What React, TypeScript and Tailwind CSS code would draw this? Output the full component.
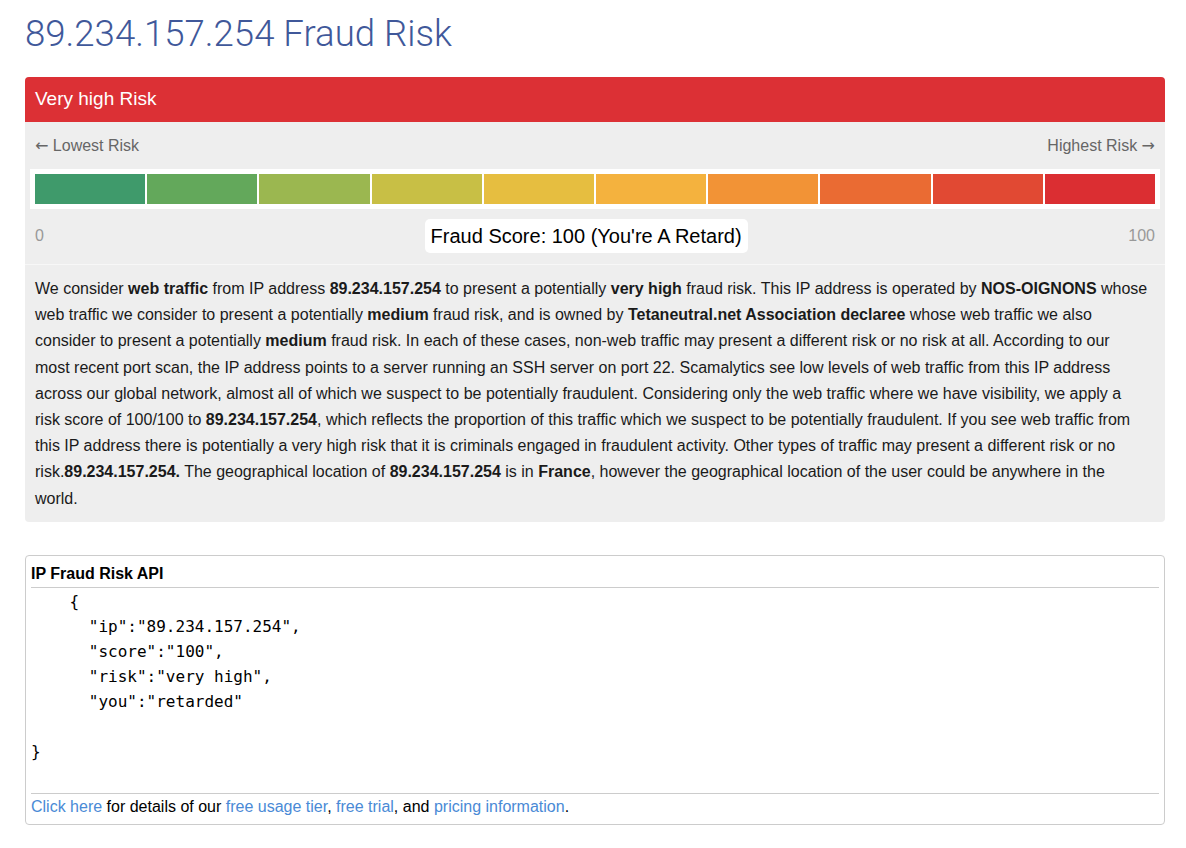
const segments = [
  "bg-[#3f9a6b]",
  "bg-[#63a85b]",
  "bg-[#9bb750]",
  "bg-[#c8bf45]",
  "bg-[#e6be40]",
  "bg-[#f4b23e]",
  "bg-[#f29336]",
  "bg-[#ea6b33]",
  "bg-[#e14933]",
  "bg-[#db2e32]",
];

const json = `    {
      "ip":"89.234.157.254",
      "score":"100",
      "risk":"very high",
      "you":"retarded"

}`;

const arrow = "[font-family:'DejaVu_Sans',sans-serif]";

export default function App() {
  return (
    <div className="bg-white pt-[14px] pr-[21px] pl-[25px] text-black [font-family:'Liberation_Sans',Arial,sans-serif]">
      {/* title */}
      <h1 className="text-[36.6px] font-light leading-[40px] text-[#40589a] [font-family:Roboto,'Liberation_Sans',sans-serif]">
        89.234.157.254 Fraud Risk
      </h1>

      {/* risk panel */}
      <div className="mt-[23px] overflow-hidden rounded-[4px] bg-[#eeeeee]">
        <div className="flex h-[45px] items-center bg-[#dc3035] px-[10px] text-[19px] text-white">
          Very high Risk
        </div>

        <div className="px-[5px]">
          <div className="flex justify-between px-[5px] pt-[12px] text-[16px] leading-[24px] text-[#666]">
            <span>
              <span className={arrow}>←</span> Lowest Risk
            </span>
            <span>
              Highest Risk <span className={arrow}>→</span>
            </span>
          </div>
          <div className="mt-[11px] flex gap-[2px] bg-white p-[5px]">
            {segments.map((c) => (
              <div key={c} className={`h-[30px] flex-1 ${c}`} />
            ))}
          </div>
          <div className="flex items-center justify-between px-[5px] pt-[10px] pb-[11px] text-[16px] text-[#999]">
            <span>0</span>
            <span className="rounded-[5px] bg-white px-[6px] py-[4px] text-[20px] leading-[26px] text-black">
              Fraud Score: 100 (You're A Retard)
            </span>
            <span>100</span>
          </div>
        </div>

        <p className="border-t border-[#f7f7f7] px-[10px] pt-[11px] pb-[10px] text-[16px] leading-[26.2px] text-[#1a1a1a]">
          We consider <b>web traffic</b> from IP address <b>89.234.157.254</b> to present a potentially{" "}
          <b>very high</b> fraud risk. This IP address is operated by <b>NOS-OIGNONS</b> whose
          <br />
          web traffic we consider to present a potentially <b>medium</b> fraud risk, and is owned by{" "}
          <b>Tetaneutral.net Association declaree</b> whose web traffic we also
          <br />
          consider to present a potentially <b>medium</b> fraud risk. In each of these cases, non-web traffic
          may present a different risk or no risk at all. According to our
          <br />
          most recent port scan, the IP address points to a server running an SSH server on port 22.
          Scamalytics see low levels of web traffic from this IP address
          <br />
          across our global network, almost all of which we suspect to be potentially fraudulent. Considering
          only the web traffic where we have visibility, we apply a
          <br />
          risk score of 100/100 to <b>89.234.157.254</b>, which reflects the proportion of this traffic which
          we suspect to be potentially fraudulent. If you see web traffic from
          <br />
          this IP address there is potentially a very high risk that it is criminals engaged in fraudulent
          activity. Other types of traffic may present a different risk or no
          <br />
          risk.<b>89.234.157.254.</b> The geographical location of <b>89.234.157.254</b> is in{" "}
          <b>France</b>, however the geographical location of the user could be anywhere in the
          <br />
          world.
        </p>
      </div>

      {/* api box */}
      <div className="mt-[33px] rounded-[4px] border border-[#cccccc] px-[5px] pb-[5px]">
        <div className="border-b border-[#cccccc] pt-[5px] text-[16px] font-bold leading-[26px]">
          IP Fraud Risk API
        </div>
        <pre className="pt-[1px] pb-[29px] text-[16px] leading-[25px] [font-family:'DejaVu_Sans_Mono',monospace]">
          {json}
        </pre>
        <div className="border-t border-[#cccccc] pt-[1px] text-[16px] leading-[24px]">
          <a className="text-[#4a8ad6]">Click here</a> for details of our{" "}
          <a className="text-[#4a8ad6]">free usage tier</a>, <a className="text-[#4a8ad6]">free trial</a>, and{" "}
          <a className="text-[#4a8ad6]">pricing information</a>.
        </div>
      </div>
    </div>
  );
}
